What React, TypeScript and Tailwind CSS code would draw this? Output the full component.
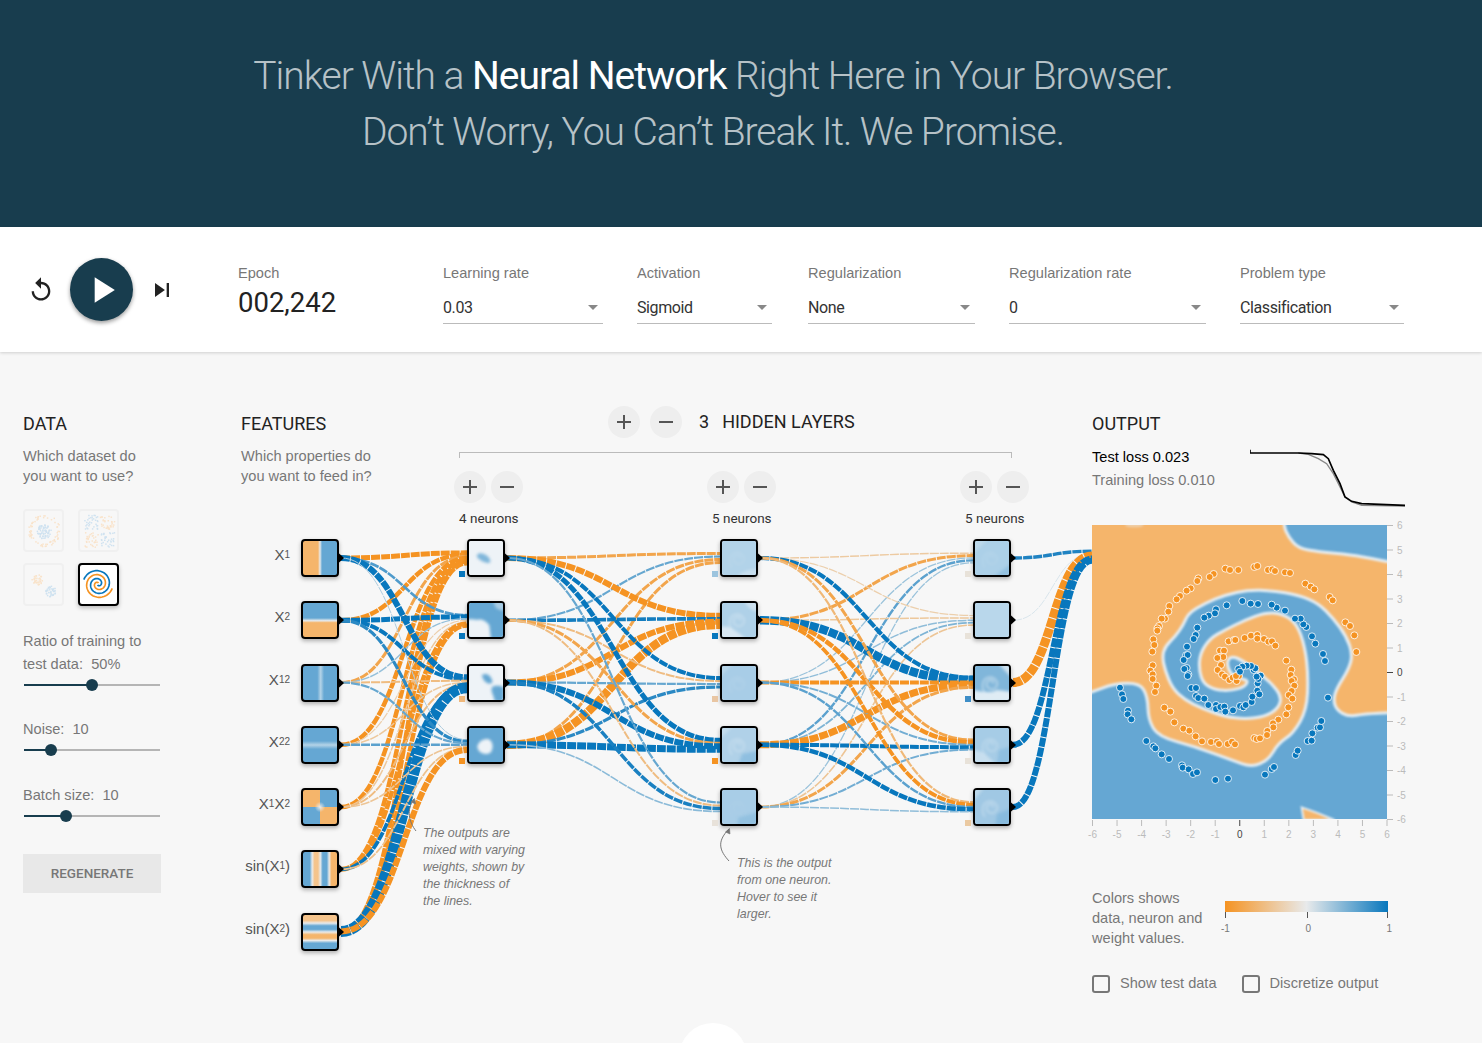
import React from 'react';

const ORANGE = [245, 147, 34];
const MID = [232, 234, 235];
const BLUE = [8, 119, 189];

// weight is the stroke width, the sign gives the colour
function linkColor(w: number) {
  const t = Math.min(1, Math.abs(w) / 3.8);
  const end = w < 0 ? ORANGE : BLUE;
  const c = MID.map((m, i) => Math.round(m + (end[i] - m) * t));
  return `rgb(${c[0]},${c[1]},${c[2]})`;
}

const ROWS = [558, 620.3, 682.5, 744.8, 807, 869.3, 931.5];
const LAYERS = [
  { left: 301, count: 7 },
  { left: 467, count: 4 },
  { left: 720, count: 5 },
  { left: 973, count: 5 },
];

// weights[layer][dest][source]
const WEIGHTS = [
  [
    [-5, -4.5, -3, -4.5, -4.5, -4.5, -4.5],
    [2.6, 5, 1.4, -1.2, -1.5, -4.5, -4.5],
    [6, 4, -2, -1.5, -2, 3.8, 11],
    [1, 3.2, 2.2, 2.4, -1.6, -1.8, -6],
  ],
  [
    [-3, 2.2, -3, -3],
    [-6, 3.6, -6, -8.5],
    [4, -2, 2.2, 3.2],
    [5, -3, 6, 7],
    [2.2, -2, 3.5, 1.6],
  ],
  [
    [-1.4, -3, 1.3, 2.4, 1.3],
    [-1.2, -1.5, 1.5, 1.8, -1.6],
    [4.2, 8.5, -4, -7, -3],
    [-3, -4.5, 2, 4, 2],
    [-2.2, -3.8, 2.4, 4.5, 1.5],
  ],
];
const OUTPUT_WEIGHTS = [3.4, 0.6, -9, 6, 6];

function linkPath(x1: number, y1: number, x2: number, y2: number) {
  const mx = (x1 + x2) / 2;
  return `M${x1} ${y1}C${mx} ${y1} ${mx} ${y2} ${x2} ${y2}`;
}

function Links() {
  const paths: { d: string; w: number }[] = [];
  WEIGHTS.forEach((layer, l) => {
    const x1 = LAYERS[l].left + 40;
    const x2 = LAYERS[l + 1].left;
    layer.forEach((inputs, dest) => {
      inputs.forEach((w, src) => {
        const y2 = ROWS[dest] + ((src - (inputs.length - 1) / 2) / inputs.length) * 12;
        paths.push({ d: linkPath(x1, ROWS[src], x2, y2), w });
      });
    });
  });
  OUTPUT_WEIGHTS.forEach((w, src) => {
    const y2 = 556 + ((src - 2) / 5) * 12;
    paths.push({ d: linkPath(1013, ROWS[src], 1092, y2), w });
  });

  return (
    <svg className="absolute left-0 top-0 overflow-visible" width="851" height="691" viewBox="241 352 851 691" fill="none">
      {paths.map((p, i) => (
        <path key={i} d={p.d} stroke={linkColor(p.w)} strokeWidth={Math.abs(p.w)} strokeDasharray="9 1" />
      ))}
      {/* hand-drawn arrows next to the two notes */}
      <path d="M416 831C409 822 406 810 414 799" stroke="#777" strokeWidth="1" />
      <path d="M411 802L414.5 798.500L415.500 804z" fill="#777" stroke="#777" strokeWidth="0.6" />
      <path d="M729 861C720 851 716 842 729 829" stroke="#777" strokeWidth="1" />
      <path d="M725.500 832L729.500 828.500L730 834z" fill="#777" stroke="#777" strokeWidth="0.6" />
    </svg>
  );
}

const SWIRL = 'M19 19c3-3-4-6-6-1-2 6 6 10 10 5 4-6-3-13-10-10-6 3-6 12-2 16';

type Blob = { d: string; fill: string };
type Art = { base: string; blobs: Blob[]; swirl?: number };

const WHITE = '#eef3f7';
const B = '#65a7d3';

const HIDDEN_ART: Art[][] = [
  [
    { base: WHITE, blobs: [{ d: 'M9 15c3-3 6-1 9 0 3 2 6 5 5 8-2 2-6 0-9-1-2-2-7-4-5-7z', fill: '#7fb6da' }] },
    {
      base: B,
      blobs: [
        { d: 'M-2 18c6-1 10 1 13 0 4-1 9 3 11 6 1 5 1 10 2 15H-2z', fill: WHITE },
        { d: 'M26-2h13v10c-4 1-8-1-10-3z', fill: '#a9cde5' },
      ],
    },
    {
      base: WHITE,
      blobs: [
        { d: 'M14 10c4-3 9 0 10 3 2 3 2 6-1 6-4 0-7-2-9-9z', fill: B },
        { d: 'M25 23c3-2 7-2 13 0v16H28c0-6-5-11-3-16z', fill: B },
      ],
    },
    { base: B, blobs: [{ d: 'M9 21c0-5 6-10 12-9 5 2 6 9 3 14-4 4-13 3-15-5z', fill: WHITE }] },
  ],
  [
    { base: '#b2d3e9', blobs: [{ d: 'M16 39c4-5 12-8 23-9v9z', fill: '#c7deee' }], swirl: 0.12 },
    { base: '#afd1e8', blobs: [{ d: 'M-2 26c8-2 14 2 22 8l6 5H-2z', fill: '#d8e7f2' }, { d: 'M24-2h15v12c-5-1-12-6-15-12z', fill: '#cde1ef' }], swirl: 0.35 },
    { base: '#a8cde7', blobs: [{ d: 'M-2-2h14L-2 12z', fill: '#b8d6ea' }], swirl: 0.12 },
    { base: '#b0d1e8', blobs: [{ d: 'M22 28l17-3v14H18z', fill: '#8fbfe0' }, { d: 'M-2-2h14L-2 12z', fill: '#c3dced' }], swirl: 0.3 },
    { base: '#a8cde7', blobs: [{ d: 'M18 30l21-6v15H16z', fill: '#93c1e0' }], swirl: 0.06 },
  ],
  [
    { base: '#acd0e8', blobs: [{ d: 'M-2-2h16L-2 14z', fill: '#bcd8ea' }, { d: 'M20 39l19-14v14z', fill: '#93c1e0' }], swirl: 0.12 },
    { base: '#b9d7eb', blobs: [] },
    { base: '#80b6da', blobs: [{ d: 'M-2 26c10 2 18 4 26 0l15 2v11H-2z', fill: '#dfecf4' }, { d: 'M26-2h13v14z', fill: '#cfe2ef' }], swirl: 0.55 },
    { base: '#a6cce6', blobs: [{ d: 'M-2 24c9 0 16 6 24 15H-2z', fill: '#c7deee' }, { d: 'M26 24l13-4v19H24z', fill: '#8fbfe0' }], swirl: 0.3 },
    { base: '#a0c8e4', blobs: [{ d: 'M-2-2h12L-2 12z', fill: '#bcd8ea' }, { d: 'M24 26l15-6v19H22z', fill: '#88bbde' }], swirl: 0.38 },
  ],
];

const BIAS = [
  ['#0877bd', '#0877bd', '#efb77a', '#f59322'],
  ['#9cc4de', '#0877bd', '#e9c6a3', '#f59322', '#e8e2da'],
  ['#e8e2d9', '#e8e2d9', '#3e8ec7', '#e8e2d9', '#ebcaa2'],
];

function NodeBox({ left, top, children, className }: { left: number; top: number; children?: React.ReactNode; className?: string }) {
  return (
    <div
      className={`absolute w-[38px] h-[38px] border-2 border-black rounded-[4px] overflow-hidden shadow-[0_2px_4px_rgba(0,0,0,0.3)] ${className ?? ''}`}
      style={{ left: left - 241, top: top - 352 - 19 }}
    >
      {children}
    </div>
  );
}

function ArtSvg({ art }: { art: Art }) {
  return (
    <svg viewBox="0 0 37 37" className="w-full h-full block">
      <rect width="37" height="37" fill={art.base} />
      <g className="blur-[1.500px]">
        {art.blobs.map((b, i) => (
          <path key={i} d={b.d} fill={b.fill} />
        ))}
        {art.swirl ? <path d={SWIRL} fill="none" stroke="#fff" strokeWidth="1.600" opacity={art.swirl} /> : null}
      </g>
    </svg>
  );
}

function Tri({ left, y }: { left: number; y: number }) {
  return (
    <svg className="absolute" width="7" height="12" viewBox="0 0 7 12" style={{ left: left + 37 - 241, top: y - 352 - 6 }}>
      <path d="M0 0.500L6 6L0 11.500z" fill="#000" />
    </svg>
  );
}

const FEATURES = [
  { label: 'X', sub: '1', bg: 'bg-[linear-gradient(90deg,#f5b56b_0%,#f5b56b_44%,#e8eaeb_50%,#65a7d3_56%,#65a7d3_100%)]' },
  { label: 'X', sub: '2', bg: 'bg-[linear-gradient(180deg,#65a7d3_0%,#65a7d3_44%,#e8eaeb_52%,#f5b56b_58%,#f5b56b_100%)]' },
  { label: 'X', sub: '12', bg: 'bg-[linear-gradient(90deg,#65a7d3_0%,#65a7d3_42%,#b4d3e7_52%,#65a7d3_62%,#65a7d3_100%)]' },
  { label: 'X', sub: '22', bg: 'bg-[linear-gradient(180deg,#65a7d3_0%,#65a7d3_38%,#b4d3e7_50%,#65a7d3_62%,#65a7d3_100%)]' },
  { label: 'X', sub: '1', label2: 'X', sub2: '2', bg: 'bg-[radial-gradient(circle,#e8eaeb_0,rgba(232,234,235,0)_22%),conic-gradient(#65a7d3_0_25%,#f5b56b_25%_50%,#65a7d3_50%_75%,#f5b56b_75%_100%)]' },
  {
    pre: 'sin(', label: 'X', sub: '1', post: ')',
    bg: 'bg-[linear-gradient(90deg,#65a7d3_0%,#65a7d3_20%,#e8eaeb_27%,#f5c48c_34%,#f5c48c_44%,#e8eaeb_51%,#65a7d3_58%,#65a7d3_70%,#e8eaeb_77%,#f5b56b_84%,#f5b56b_100%)]',
  },
  {
    pre: 'sin(', label: 'X', sub: '2', post: ')',
    bg: 'bg-[linear-gradient(180deg,#f5c48c_0%,#f5c48c_16%,#e8eaeb_24%,#65a7d3_32%,#65a7d3_42%,#e8eaeb_50%,#f5b56b_58%,#f5b56b_68%,#e8eaeb_75%,#65a7d3_83%,#65a7d3_100%)]',
  },
] as { label: string; sub: string; label2?: string; sub2?: string; pre?: string; post?: string; bg: string }[];

function Sub({ children }: { children: React.ReactNode }) {
  return <span className="text-[10px] align-[2px]">{children}</span>;
}

function Network() {
  return (
    <>
      <Links />
      {FEATURES.map((f, i) => (
        <React.Fragment key={i}>
          <div
            className="absolute w-[110px] text-right text-[15px] leading-5 text-[#555]"
            style={{ left: 290 - 241 - 110, top: ROWS[i] - 352 - 13 }}
          >
            {f.pre}
            {f.label}
            <Sub>{f.sub}</Sub>
            {f.label2}
            {f.sub2 ? <Sub>{f.sub2}</Sub> : null}
            {f.post}
          </div>
          <NodeBox left={301} top={ROWS[i]} className={f.bg} />
          <Tri left={301} y={ROWS[i]} />
        </React.Fragment>
      ))}
      {HIDDEN_ART.map((layer, l) =>
        layer.map((art, i) => (
          <React.Fragment key={`${l}-${i}`}>
            <NodeBox left={LAYERS[l + 1].left} top={ROWS[i]}>
              <ArtSvg art={art} />
            </NodeBox>
            <Tri left={LAYERS[l + 1].left} y={ROWS[i]} />
            <div
              className="absolute w-[6px] h-[6px]"
              style={{ left: LAYERS[l + 1].left - 8 - 241, top: ROWS[i] + 13 - 352, backgroundColor: BIAS[l][i] }}
            />
          </React.Fragment>
        )),
      )}
    </>
  );
}

function RoundButton({ kind }: { kind: 'add' | 'remove' }) {
  return (
    <div className="w-8 h-8 rounded-full bg-[#eeeeee] flex items-center justify-center">
      <svg width="24" height="24" viewBox="0 0 24 24" fill="#555">
        <path d={kind === 'add' ? 'M19 13h-6v6h-2v-6H5v-2h6V5h2v6h6v2z' : 'M19 13H5v-2h14v2z'} />
      </svg>
    </div>
  );
}

function LayerControl({ label, className }: { label: string; className: string }) {
  return (
    <div className={`absolute top-[119px] ${className}`}>
      <div className="flex gap-[5px] -ml-[5px]">
        <RoundButton kind="add" />
        <RoundButton kind="remove" />
      </div>
      <div className="mt-[5px] text-[13.500px] leading-5 font-['Roboto',sans-serif] text-[#333]">{label}</div>
    </div>
  );
}

// small seeded generator so the thumbnails stay the same on every load
function scatter(seed: number, n: number, place: (a: number, b: number, i: number) => [number, number]) {
  let s = seed;
  const next = () => {
    s = (s * 9301 + 49297) % 233280;
    return s / 233280;
  };
  return Array.from({ length: n }, (_, i) => place(next(), next(), i));
}

function Dots({ pts, fill }: { pts: [number, number][]; fill: string }) {
  return (
    <>
      {pts.map((p, i) => (
        <rect key={i} x={p[0]} y={p[1]} width="1.500" height="1.500" fill={fill} />
      ))}
    </>
  );
}

function blob(cx: number, cy: number, r: number) {
  return (a: number, b: number): [number, number] => {
    const t = a * Math.PI * 2;
    const d = Math.sqrt(b) * r;
    return [cx + Math.cos(t) * d, cy + Math.sin(t) * d];
  };
}

function spiral(offset: number) {
  let d = '';
  for (let i = 0; i <= 80; i++) {
    const t = (i / 80) * 1.75 * Math.PI * 2;
    const r = 1 + t * 1.3;
    d += `${i ? 'L' : 'M'}${(18.500 + Math.sin(t + offset) * r).toFixed(1)} ${(19 + Math.cos(t + offset) * r).toFixed(1)}`;
  }
  return d;
}

function Thumb({ selected, children }: { selected?: boolean; children: React.ReactNode }) {
  return (
    <div
      className={
        selected
          ? 'w-[41px] h-[43px] border-2 border-black rounded-[4px] bg-white shadow-[0_2px_4px_rgba(0,0,0,0.25)]'
          : 'w-[41px] h-[43px] border-2 border-[#f0f0f0] rounded-[4px]'
      }
    >
      <svg viewBox="0 0 38 39" className="w-full h-full block">
        {children}
      </svg>
    </div>
  );
}

const SOFT_O = '#f9e3ca';
const SOFT_B = '#cfe2f0';

function Datasets() {
  const ring = scatter(7, 70, (a, b) => {
    const t = a * Math.PI * 2;
    const d = 13 + b * 3.500;
    return [19 + Math.cos(t) * d, 19 + Math.sin(t) * d];
  });
  return (
    <div className="mt-[23px] grid grid-cols-[41px_41px] gap-x-[14px] gap-y-[11px]">
      <Thumb>
        <Dots pts={ring} fill={SOFT_O} />
        <Dots pts={scatter(11, 70, blob(19, 20, 7.500))} fill={SOFT_B} />
      </Thumb>
      <Thumb>
        <Dots pts={scatter(3, 34, (a, b) => [4 + a * 14, 3 + b * 15])} fill={SOFT_B} />
        <Dots pts={scatter(5, 34, (a, b) => [20 + a * 15, 3 + b * 15])} fill={SOFT_O} />
        <Dots pts={scatter(9, 34, (a, b) => [4 + a * 14, 21 + b * 15])} fill={SOFT_O} />
        <Dots pts={scatter(13, 34, (a, b) => [20 + a * 15, 21 + b * 15])} fill={SOFT_B} />
      </Thumb>
      <Thumb>
        <Dots pts={scatter(17, 36, blob(12, 14, 5.500))} fill={SOFT_O} />
        <Dots pts={scatter(19, 40, blob(26, 26, 5.500))} fill={SOFT_B} />
      </Thumb>
      <Thumb selected>
        <path d={spiral(2.84)} fill="none" stroke="#f59322" strokeWidth="1.700" />
        <path d={spiral(2.84 + Math.PI)} fill="none" stroke="#0877bd" strokeWidth="1.700" />
      </Thumb>
    </div>
  );
}

function Slider({ fill, className }: { fill: string; className?: string }) {
  return (
    <div className={`relative w-[136px] h-[18px] ml-px ${className ?? ''}`}>
      <div className="absolute left-0 right-0 top-2 h-0.5 bg-[#b5b5b5]" />
      <div className={`absolute left-0 top-2 h-0.5 bg-[#183d4e] ${fill}`} />
      <div className={`absolute top-[3px] w-3 h-3 rounded-full bg-[#183d4e] ${fill === 'w-[68px]' ? 'left-[62px]' : fill === 'w-[27px]' ? 'left-[21px]' : 'left-[36px]'}`} />
    </div>
  );
}

function DataColumn() {
  return (
    <aside className="w-[241px] shrink-0 pt-[60px] pl-[23px] text-[14.600px] text-[#777]">
      <h4 className="font-['Roboto',sans-serif] text-[18px] leading-6 text-[#222]">DATA</h4>
      <p className="mt-[10px] leading-5">
        Which dataset do
        <br />
        you want to use?
      </p>
      <Datasets />
      <p className="mt-[24px] leading-[23px]">
        Ratio of training to
        <br />
        test data:&nbsp; 50%
      </p>
      <Slider fill="w-[68px]" />
      <p className="mt-[24px] leading-[22px]">Noise:&nbsp; 10</p>
      <Slider fill="w-[27px]" className="mt-px" />
      <p className="mt-[25px] leading-[22px]">Batch size:&nbsp; 10</p>
      <Slider fill="w-[42px]" className="mt-px" />
      <button className="mt-[29px] block w-[138px] h-[39px] bg-[#e8e8e8] text-[#777] text-[13.500px] font-medium font-['Roboto',sans-serif]">
        REGENERATE
      </button>
    </aside>
  );
}

function NetworkColumn() {
  return (
    <div className="relative w-[851px] h-[691px] shrink-0">
      <div className="flex">
        <div className="w-[367px] pt-[60px] shrink-0">
          <h4 className="font-['Roboto',sans-serif] text-[18px] leading-6 text-[#222]">FEATURES</h4>
          <p className="mt-[10px] leading-5 text-[14.600px] text-[#777]">
            Which properties do
            <br />
            you want to feed in?
          </p>
        </div>
        <div className="pt-[54px] flex items-start gap-[10px] font-['Roboto',sans-serif]">
          <RoundButton kind="add" />
          <RoundButton kind="remove" />
          <div className="ml-[7px] text-[18px] leading-8 text-[#222]">3</div>
          <div className="ml-[3px] text-[18px] leading-8 text-[#222]">HIDDEN LAYERS</div>
        </div>
      </div>
      <div className="absolute left-[218px] top-[100px] w-[553px] h-[6px] border border-b-0 border-[#bbbbbb]" />
      <LayerControl label="4 neurons" className="left-[218px]" />
      <LayerControl label="5 neurons" className="left-[471px]" />
      <LayerControl label="5 neurons" className="left-[724px]" />
      <Network />
      <p className="absolute left-[182px] top-[473px] w-[106px] text-[12.400px] leading-[17px] italic text-[#777]">
        The outputs are mixed with varying weights, shown by the thickness of the lines.
      </p>
      <p className="absolute left-[496px] top-[503px] w-[100px] text-[12.400px] leading-[17px] italic text-[#777]">
        This is the output from one neuron. Hover to see it larger.
      </p>
    </div>
  );
}

// points below were read off a 3x crop of the plot
const ORANGE_REGION = [
  [-120, -120], [590, -120], [595, 15], [610, 50], [640, 85], [700, 95], [800, 105], [860, 115], [920, 128], [1080, 140], [1080, 575], [920, 578], [840, 582], [790, 590], [755, 570],
  [745, 540], [755, 505], [790, 450], [803, 405], [785, 350], [745, 295], [700, 250], [640, 225], [560, 212], [490, 210], [420, 225],
  [360, 250], [310, 280], [295, 315], [270, 350], [240, 380], [232, 410], [240, 450], [262, 505], [300, 540], [350, 565], [420, 590],
  [480, 597], [540, 590], [580, 565], [590, 530], [560, 490], [510, 450], [470, 420], [440, 408], [425, 425], [435, 460], [460, 475],
  [490, 480], [480, 500], [440, 512], [390, 510], [355, 490], [342, 450], [345, 400], [375, 355], [420, 330], [480, 300], [540, 278],
  [590, 280], [635, 310], [660, 380], [670, 470], [665, 570], [625, 640], [580, 670], [550, 720], [500, 742], [440, 720], [330, 680],
  [220, 650], [190, 600], [188, 530], [165, 490], [90, 490], [10, 520], [-120, 560],
];

function smooth(pts: number[][]) {
  const n = pts.length;
  let d = `M${(pts[0][0] + pts[n - 1][0]) / 2} ${(pts[0][1] + pts[n - 1][1]) / 2}`;
  pts.forEach((p, i) => {
    const q = pts[(i + 1) % n];
    d += `Q${p[0]} ${p[1]} ${(p[0] + q[0]) / 2} ${(p[1] + q[1]) / 2}`;
  });
  return d + 'z';
}

const ORANGE_DOTS = [
  [340, 175], [337, 183], [317, 205], [305, 212], [285, 228], [275, 238], [253, 258], [250, 275], [240, 296], [230, 296], [222, 318], [217, 325], [217, 332],
  [205, 358], [208, 375], [202, 395], [203, 436], [196, 452], [203, 463], [203, 477], [214, 497], [210, 516], [238, 563], [256, 575], [268, 607], [295, 626],
  [313, 632], [332, 649], [351, 664], [378, 666], [396, 665], [402, 672], [428, 672], [441, 665], [450, 673], [386, 162], [374, 171], [421, 146], [435, 150],
  [460, 150], [508, 141], [517, 138], [549, 150], [562, 148], [570, 153], [600, 157], [615, 159], [661, 191], [677, 200], [688, 208], [734, 231], [743, 241],
  [781, 307], [795, 318], [808, 346], [814, 396], [604, 422], [619, 449], [617, 465], [627, 478], [620, 483], [628, 497], [620, 513], [611, 525], [622, 536],
  [610, 562], [604, 583], [580, 599], [564, 610], [565, 622], [547, 633], [546, 645], [508, 654], [515, 657], [525, 655], [431, 364], [447, 360], [451, 360],
  [479, 354], [498, 347], [517, 345], [517, 356], [537, 357], [550, 365], [561, 364], [571, 377], [405, 392], [417, 392], [408, 410], [415, 411], [397, 414],
  [408, 435], [398, 450], [411, 463], [420, 470], [433, 480], [443, 473], [455, 483], [462, 468], [453, 468],
];

const BLUE_DOTS = [
  [105, 503], [111, 523], [115, 537], [129, 572], [128, 583], [139, 598], [184, 663], [205, 679], [211, 685], [230, 703], [252, 717], [291, 736], [293, 743],
  [311, 748], [324, 762], [336, 757], [391, 780], [429, 776], [540, 764], [560, 747], [567, 741], [632, 705], [638, 692], [668, 663], [680, 662], [682, 640],
  [698, 623], [705, 622], [709, 603], [729, 533], [720, 423], [714, 402], [691, 371], [681, 349], [664, 321], [655, 313], [647, 296], [630, 296], [600, 272],
  [575, 263], [560, 254], [519, 252], [497, 251], [472, 243], [425, 256], [393, 268], [390, 280], [371, 287], [358, 293], [337, 323], [332, 345], [326, 357],
  [306, 380], [303, 406], [308, 405], [296, 420], [305, 444], [298, 447], [310, 463], [308, 468], [319, 504], [333, 504], [333, 528], [340, 534], [358, 536],
  [370, 555], [393, 555], [393, 567], [406, 561], [418, 560], [421, 575], [444, 571], [465, 558], [475, 562], [482, 555], [500, 546], [502, 530], [517, 512],
  [523, 523], [518, 490], [527, 467], [520, 477], [515, 470], [506, 450], [511, 445], [498, 438], [485, 437], [472, 440], [460, 447], [465, 455],
];

const TICKS = [-6, -5, -4, -3, -2, -1, 0, 1, 2, 3, 4, 5, 6];

function Plot() {
  return (
    <svg width="325" height="325" viewBox="0 0 325 325" className="block -ml-[7px] mt-[10px]">
      <defs>
        <clipPath id="plot-clip">
          <rect x="21" y="15" width="885" height="882" />
        </clipPath>
      </defs>
      <g transform="scale(0.33333)">
        <g clipPath="url(#plot-clip)">
          <rect x="21" y="15" width="885" height="882" fill="#65a7d3" />
          <g className="blur-[3px]">
            <path d={smooth(ORANGE_REGION)} fill="#f5b56b" stroke="#e6eef3" strokeWidth="9" strokeLinejoin="round" />
            <path d="M650 862Q700 878 748 900H656z" fill="#f5b56b" stroke="#e6eef3" strokeWidth="6" />
            <ellipse cx="148" cy="15" rx="28" ry="7" fill="#f0cfa8" />
          </g>
        </g>
        {ORANGE_DOTS.map((p, i) => (
          <circle key={i} cx={p[0]} cy={p[1]} r="10.500" fill="#f59322" stroke="#fff" strokeWidth="2.500" />
        ))}
        {BLUE_DOTS.map((p, i) => (
          <circle key={`b${i}`} cx={p[0]} cy={p[1]} r="10.500" fill="#0877bd" stroke="#fff" strokeWidth="2.500" />
        ))}
      </g>
      <g fontFamily="Liberation Sans, sans-serif" fontSize="10">
        {TICKS.map((t, i) => {
          const x = 7.500 + i * (294.500 / 12);
          const y = 5.500 + i * (294 / 12);
          const color = t === 0 ? '#444' : '#bbb';
          return (
            <g key={t} fill={color}>
              <path d={`M${x} 300V306`} stroke={color} />
              <text x={x} y="318" textAnchor="middle">{t}</text>
              <path d={`M302 ${y}H308`} stroke={color} />
              <text x="312" y={y + 3.500}>{-t}</text>
            </g>
          );
        })}
      </g>
    </svg>
  );
}

function LossChart() {
  return (
    <svg width="155" height="60" viewBox="495 20 465 180" className="block" fill="none">
      <path d="M640 38L670 42 700 55 725 70 745 100 765 140 780 170 800 185 830 195 960 197" stroke="#888" strokeWidth="4" />
      <path d="M495 28V38H640L680 40 715 43 730 55 745 90 765 130 780 170 800 183 830 190 960 195" stroke="#000" strokeWidth="5" />
    </svg>
  );
}

function Checkbox({ label }: { label: string }) {
  return (
    <label className="flex items-center gap-[10px]">
      <span className="w-[18px] h-[18px] border-2 border-[#777] rounded-[3px]" />
      <span>{label}</span>
    </label>
  );
}

function OutputColumn() {
  return (
    <aside className="w-[320px] shrink-0 pt-[60px] text-[14.600px] text-[#777]">
      <h4 className="font-['Roboto',sans-serif] text-[18px] leading-6 text-[#222]">OUTPUT</h4>
      <div className="flex items-start h-[74px]">
        <div className="w-[158px] pt-[10px] leading-[23px]">
          <div className="text-black">Test loss 0.023</div>
          <div>Training loss 0.010</div>
        </div>
        <div className="pt-[11px]">
          <LossChart />
        </div>
      </div>
      <Plot />
      <div className="mt-[43px] flex">
        <p className="w-[133px] leading-5">
          Colors shows
          <br />
          data, neuron and
          <br />
          weight values.
        </p>
        <div className="w-[163px] pt-[13px]">
          <div className="h-[11px] bg-[linear-gradient(90deg,#f59322,#e8eaeb,#0877bd)]" />
          <div className="flex justify-between h-[6px] border-x border-[#555]">
            <div className="ml-[81px] w-px bg-[#555]" />
          </div>
          <div className="flex justify-between text-[10px] leading-4 text-[#777] -mx-[4px] mt-[3px]">
            <span>-1</span>
            <span>0</span>
            <span>1</span>
          </div>
        </div>
      </div>
      <div className="mt-[25px] flex gap-[25px]">
        <Checkbox label="Show test data" />
        <Checkbox label="Discretize output" />
      </div>
    </aside>
  );
}

function Select({ label, value, className }: { label: string; value: string; className: string }) {
  return (
    <div className={`shrink-0 ${className}`}>
      <div className="text-[14.600px] leading-5 text-[#777]">{label}</div>
      <div className="mt-[9px] h-8 flex items-center justify-between border-b border-[#bbbbbb] font-['Roboto',sans-serif] text-[16px] tracking-[-0.4px] text-[#333]">
        <span className="mt-px">{value}</span>
        <span className="mr-[5px] w-0 h-0 border-x-[5px] border-t-[5px] border-x-transparent border-t-[#888]" />
      </div>
    </div>
  );
}

function TopBar() {
  return (
    <section className="relative z-10 h-[125px] bg-white shadow-[0_1px_3px_rgba(0,0,0,0.16)] pl-[27px] flex">
      <svg width="28" height="28" viewBox="0 0 24 24" fill="#222" className="self-center">
        <path d="M12 5V1L7 6l5 5V7c3.310 0 6 2.690 6 6s-2.690 6-6 6-6-2.690-6-6H4c0 4.420 3.580 8 8 8s8-3.580 8-8-3.580-8-8-8z" />
      </svg>
      <div className="ml-[15px] self-center w-[63px] h-[63px] rounded-full bg-[#183d4e] shadow-[0_2px_4px_rgba(0,0,0,0.4)] flex items-center justify-center">
        <svg width="44" height="44" viewBox="0 0 24 24" fill="#fff">
          <path d="M8 5v14l11-7z" />
        </svg>
      </div>
      <svg width="28" height="28" viewBox="0 0 24 24" fill="#222" className="ml-[15px] self-center">
        <path d="M6 18l8.500-6L6 6v12zM16 6v12h2V6h-2z" />
      </svg>
      <div className="ml-[62px] w-[205px] shrink-0 pt-[36px]">
        <div className="text-[14.600px] leading-5 text-[#777]">Epoch</div>
        <div className="mt-[3px] font-['Roboto',sans-serif] text-[27.500px] leading-[34px] text-[#222]">002,242</div>
      </div>
      <div className="pt-[36px] flex">
        <Select label="Learning rate" value="0.03" className="w-[160px]" />
        <Select label="Activation" value="Sigmoid" className="ml-[34px] w-[135px]" />
        <Select label="Regularization" value="None" className="ml-[36px] w-[167px]" />
        <Select label="Regularization rate" value="0" className="ml-[34px] w-[197px]" />
        <Select label="Problem type" value="Classification" className="ml-[34px] w-[164px]" />
      </div>
    </section>
  );
}

export default function App() {
  return (
    <div className="relative w-[1482px] h-[1043px] overflow-hidden bg-[#f7f7f7] font-['Liberation_Sans',Arial,sans-serif]">
      <header className="h-[227px] bg-[#183d4e] pt-[48px] pr-[56px] text-center font-['Roboto',sans-serif] text-[39px] font-light leading-[56px] tracking-[-1px] text-white/70">
        <h1>
          Tinker With a <b className="font-normal text-white">Neural Network</b> Right Here in Your Browser.
          <br />
          Don’t Worry, You Can’t Break It. We Promise.
        </h1>
      </header>
      <TopBar />
      <main className="flex">
        <DataColumn />
        <NetworkColumn />
        <OutputColumn />
      </main>
      <div className="absolute left-[679px] top-[1023px] w-[68px] h-[68px] rounded-full bg-white" />
    </div>
  );
}
